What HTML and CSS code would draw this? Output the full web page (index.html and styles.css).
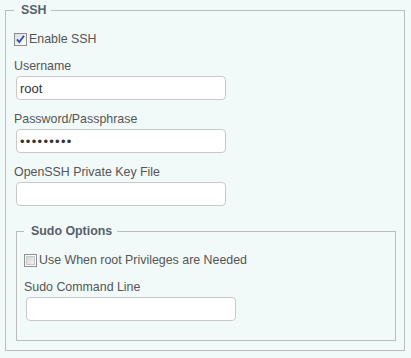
FILE: index.html
```html
<!DOCTYPE html>
<html>
<head>
<meta charset="utf-8">
<link rel="stylesheet" href="styles.css">
</head>
<body>
<fieldset class="box outer">
  <legend class="legend">SSH</legend>
  <label class="check-row">
    <span class="cb">
      <svg width="13" height="13" viewBox="0 0 13 13">
        <defs><linearGradient id="g1" x1="0" y1="0" x2="1" y2="1"><stop offset="0" stop-color="#d9dde2"/><stop offset="1" stop-color="#ffffff"/></linearGradient></defs>
        <rect x="0.5" y="0.5" width="12" height="12" fill="url(#g1)" stroke="#8e8f8f"/>
        <path d="M3 6.3 L5.3 9 L10 2.8" fill="none" stroke="#2b4ea8" stroke-width="1.8"/>
      </svg>
    </span>
    <span>Enable SSH</span>
  </label>
  <div class="field first">
    <label class="lbl">Username</label>
    <input class="txt" type="text" value="root">
  </div>
  <div class="field">
    <label class="lbl">Password/Passphrase</label>
    <input class="txt pw" type="password" value="123456789">
  </div>
  <div class="field">
    <label class="lbl">OpenSSH Private Key File</label>
    <input class="txt" type="text" value="">
  </div>
  <fieldset class="box inner">
    <legend class="legend">Sudo Options</legend>
    <label class="check-row">
      <span class="cb">
        <svg width="13" height="13" viewBox="0 0 13 13">
          <defs><linearGradient id="g2" x1="0" y1="0" x2="1" y2="1"><stop offset="0" stop-color="#d2d2d2"/><stop offset="1" stop-color="#f4f4f4"/></linearGradient></defs>
          <rect x="0.5" y="0.5" width="12" height="12" fill="#fafafa" stroke="#8e8f8f"/>
          <rect x="2.5" y="2.5" width="8" height="8" fill="url(#g2)" stroke="#c8c8c8"/>
        </svg>
      </span>
      <span>Use When root Privileges are Needed</span>
    </label>
    <div class="field first">
      <label class="lbl">Sudo Command Line</label>
      <input class="txt" type="text" value="">
    </div>
  </fieldset>
</fieldset>
</body>
</html>
```

FILE: styles.css
```css
html, body {
  margin: 0;
  background: #f2f9f9;
}
body {
  padding: 3px 6px 0 5px;
  font-family: "Liberation Sans", Arial, sans-serif;
  font-size: 12.4px;
  color: #555;
}
.box {
  margin: 0;
  border: 1px solid #bcbcbc;
  min-width: 0;
}
.outer {
  padding: 0 8px 9px 8px;
}
.inner {
  margin: 18px 0 0 2px;
  padding: 0 7px 19px 7px;
}
.legend {
  padding: 0 5px 0 7px;
  line-height: 14px;
  font-weight: bold;
  color: #56616b;
}
.check-row {
  display: flex;
  align-items: center;
  height: 13px;
  margin-top: 16px;
  line-height: 13px;
}
.cb {
  display: block;
  width: 13px;
  height: 13px;
  margin-right: 2px;
}
.cb svg {
  display: block;
}
.field {
  margin-top: 11px;
}
.field.first {
  margin-top: 12px;
}
.lbl {
  display: block;
  line-height: 16px;
  margin-bottom: 2px;
}
.txt {
  display: block;
  box-sizing: border-box;
  width: 210px;
  height: 24px;
  margin: 0 0 0 2px;
  padding: 0 3px;
  border: 1px solid #c9c9c9;
  border-radius: 4px;
  background: #fff;
  font-family: "Liberation Sans", Arial, sans-serif;
  font-size: 13px;
  color: #333;
  outline: none;
}
.pw {
  letter-spacing: 1.3px;
}
```
